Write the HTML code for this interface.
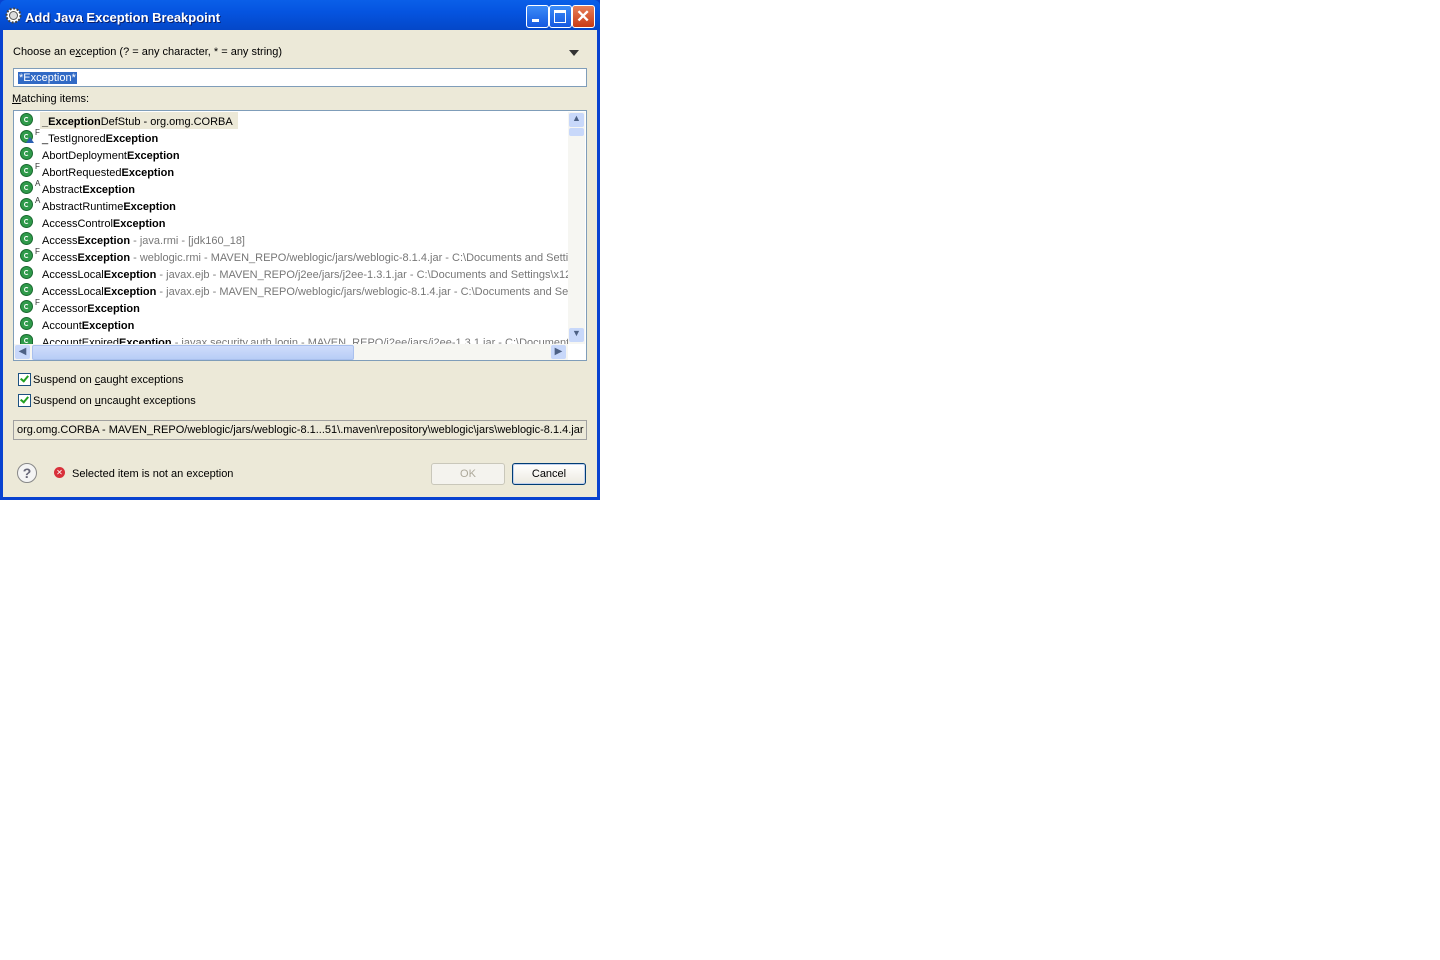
<!DOCTYPE html>
<html><head><style>
body{margin:0;width:1440px;height:960px;background:#fff;font-family:"Liberation Sans",sans-serif;font-size:11px;color:#000;position:relative;overflow:hidden}
.win{position:absolute;left:0;top:0;width:600px;height:500px;background:#0842d0;}
.title{position:absolute;left:0;top:0;width:600px;height:30px;background:linear-gradient(#0a5fe8,#0554e0 40%,#0447c8);border-radius:6px 6px 0 0}
.title span{position:absolute;left:25px;top:10px;color:#fff;font-weight:bold;font-size:13px;text-shadow:1px 1px #0a1e6a}
.body{position:absolute;left:3px;top:30px;width:594px;height:467px;background:#ece9d8}
.a{position:absolute;white-space:nowrap}
.tb{position:absolute;width:21px;height:21px;top:5px;border:1px solid #fff;border-radius:3px;background:linear-gradient(#3c8cf8,#1558e0)}
.row{position:absolute;left:42px;height:17px;line-height:17px;white-space:nowrap}
.row b{font-weight:bold}.g{color:#777}
.ic{position:absolute;left:20px;width:11px;height:11px;border-radius:50%;background:#2f9a4a;border:1px solid #1a6a30}
.ic:after{content:"";position:absolute;left:3px;top:3px;width:5px;height:5px;border:1px solid #fff;border-right-color:transparent;border-radius:50%;box-sizing:border-box}
.sup{position:absolute;left:35px;font-size:8px;color:#333}
.cb{position:absolute;left:18px;width:11px;height:11px;border:1px solid #1c5180;background:#fff}
.cb:after{content:"";position:absolute;left:3px;top:0px;width:3px;height:6px;border:solid #21a121;border-width:0 2px 2px 0;transform:rotate(40deg)}
</style></head><body>
<div class="win">
<div class="title"><svg style="position:absolute;left:5px;top:7px" width="17" height="17"><circle cx="8.5" cy="8.5" r="7" fill="#fff" stroke="#444" stroke-width="2" stroke-dasharray="2 1.6"/><circle cx="8.5" cy="8.5" r="4" fill="#ddd" stroke="#555"/></svg><span>Add Java Exception Breakpoint</span>
<div class="tb" style="left:526px"><div style="position:absolute;left:5px;top:13px;width:7px;height:3px;background:#fff"></div></div>
<div class="tb" style="left:549px"><div style="position:absolute;left:4px;top:4px;width:10px;height:9px;border:1px solid #fff;border-top-width:3px"></div></div>
<div class="tb" style="left:572px;background:linear-gradient(#e8805a,#c83a14)"><div style="position:absolute;left:3px;top:0;color:#fff;font-size:17px;font-weight:bold;line-height:21px">✕</div></div>
</div>
<div class="body">
<div class="a" style="left:10px;top:16px">Choose an e<u>x</u>ception (? = any character, * = any string)</div>
<div class="a" style="left:566px;top:20px;width:0;height:0;border:5px solid transparent;border-top:6px solid #333"></div>
<div class="a" style="left:10px;top:38px;width:572px;height:17px;background:#fff;border:1px solid #7f9db9"><span style="position:absolute;left:4px;top:3px;background:#316ac5;color:#fff;padding:0 1px">*Exception*</span></div>
<div class="a" style="left:9px;top:63px"><u>M</u>atching items:</div>
<div class="a" style="left:10px;top:80px;width:572px;height:249px;background:#fff;border:1px solid #7f9db9;overflow:hidden">
</div>
</div>
<div style="position:absolute;left:40px;top:112px;width:198px;height:17px;background:#ece9d8"></div>
<div class="row" style="top:114px"><b>_Exception</b>DefStub - org.omg.CORBA</div>
<div class="row" style="top:131px">_TestIgnored<b>Exception</b></div>
<div class="row" style="top:148px">AbortDeployment<b>Exception</b></div>
<div class="row" style="top:165px">AbortRequested<b>Exception</b></div>
<div class="row" style="top:182px">Abstract<b>Exception</b></div>
<div class="row" style="top:199px">AbstractRuntime<b>Exception</b></div>
<div class="row" style="top:216px">AccessControl<b>Exception</b></div>
<div class="row" style="top:233px">Access<b>Exception</b> <span class="g">- java.rmi - [jdk160_18]</span></div>
<div class="row" style="top:250px;width:526px;overflow:hidden">Access<b>Exception</b> <span class="g">- weblogic.rmi - MAVEN_REPO/weblogic/jars/weblogic-8.1.4.jar - C:\Documents and Settings</span></div>
<div class="row" style="top:267px;width:526px;overflow:hidden">AccessLocal<b>Exception</b> <span class="g">- javax.ejb - MAVEN_REPO/j2ee/jars/j2ee-1.3.1.jar - C:\Documents and Settings\x12</span></div>
<div class="row" style="top:284px;width:526px;overflow:hidden">AccessLocal<b>Exception</b> <span class="g">- javax.ejb - MAVEN_REPO/weblogic/jars/weblogic-8.1.4.jar - C:\Documents and Settings</span></div>
<div class="row" style="top:301px">Accessor<b>Exception</b></div>
<div class="row" style="top:318px">Account<b>Exception</b></div>
<div class="row" style="top:335px;height:9px;overflow:hidden;width:526px">AccountExpired<b>Exception</b> <span class="g">- javax.security.auth.login - MAVEN_REPO/j2ee/jars/j2ee-1.3.1.jar - C:\Documents</span></div>
<div class="ic" style="top:113px"></div><div class="ic" style="top:130px"></div><div class="ic" style="top:147px"></div><div class="ic" style="top:164px"></div><div class="ic" style="top:181px"></div><div class="ic" style="top:198px"></div><div class="ic" style="top:215px"></div><div class="ic" style="top:232px"></div><div class="ic" style="top:249px"></div><div class="ic" style="top:266px"></div><div class="ic" style="top:283px"></div><div class="ic" style="top:300px"></div><div class="ic" style="top:317px"></div><div class="ic" style="top:334px;height:9px;border-radius:50% 50% 0 0"></div>
<div class="a" style="left:26px;top:137px;width:0;height:0;border:4px solid transparent;border-bottom:6px solid #2a5fb0;border-top:0"></div>
<span class="sup" style="top:128px">F</span><span class="sup" style="top:162px">F</span><span class="sup" style="top:179px">A</span><span class="sup" style="top:196px">A</span><span class="sup" style="top:247px">F</span><span class="sup" style="top:298px">F</span>
<div style="position:absolute;left:568px;top:112px;width:17px;height:232px;background:#f6f6f2"></div>
<div style="position:absolute;left:569px;top:113px;width:15px;height:14px;background:#c8d8fa;border-radius:2px;font-size:9px;text-align:center;color:#4d6185">▲</div>
<div style="position:absolute;left:569px;top:128px;width:15px;height:8px;background:#c8d8fa;border-radius:2px"></div>
<div style="position:absolute;left:569px;top:328px;width:15px;height:14px;background:#c8d8fa;border-radius:2px;font-size:9px;text-align:center;color:#4d6185">▼</div>
<div style="position:absolute;left:14px;top:344px;width:554px;height:16px;background:#f6f6f2"></div>
<div style="position:absolute;left:15px;top:345px;width:15px;height:14px;background:#c8d8fa;border-radius:2px;font-size:10px;text-align:center;color:#4d6185;line-height:14px">◀</div>
<div style="position:absolute;left:32px;top:345px;width:320px;height:13px;background:linear-gradient(#cfdcfb,#b8cdf6);border:1px solid #a9c0ee;border-radius:2px"></div>
<div style="position:absolute;left:551px;top:345px;width:15px;height:14px;background:#c8d8fa;border-radius:2px;font-size:10px;text-align:center;color:#4d6185;line-height:14px">▶</div>
<div class="cb" style="top:373px"></div><div class="a" style="left:33px;top:374px">Suspend on <u>c</u>aught exceptions</div>
<div class="cb" style="top:394px"></div><div class="a" style="left:33px;top:395px">Suspend on <u>u</u>ncaught exceptions</div>
<div class="a" style="left:13px;top:420px;width:572px;height:18px;border:1px solid #a0a0a0;background:#ece9d8;line-height:18px"><span style="padding-left:3px">org.omg.CORBA - MAVEN_REPO/weblogic/jars/weblogic-8.1...51\.maven\repository\weblogic\jars\weblogic-8.1.4.jar</span></div>
<div class="a" style="left:17px;top:463px;width:18px;height:18px;border:1px solid #888;border-radius:50%;background:#f4f4f4;text-align:center;line-height:18px;font-size:14px;color:#667;font-weight:bold">?</div>
<div class="a" style="left:54px;top:467px;width:11px;height:11px;border-radius:50%;background:#d8303a;color:#fff;font-size:8px;text-align:center;line-height:11px">✕</div>
<div class="a" style="left:72px;top:468px">Selected item is not an exception</div>
<div class="a" style="left:431px;top:463px;width:72px;height:20px;border:1px solid #c9c7ba;border-radius:3px;background:#f4f3ee;color:#aca899;text-align:center;line-height:20px">OK</div>
<div class="a" style="left:512px;top:463px;width:72px;height:20px;border:1px solid #003c74;border-radius:3px;background:linear-gradient(#fff,#ece9e0);text-align:center;line-height:20px;box-shadow:inset 0 0 0 1px #c0d0ee">Cancel</div>
</div>
</body></html>
